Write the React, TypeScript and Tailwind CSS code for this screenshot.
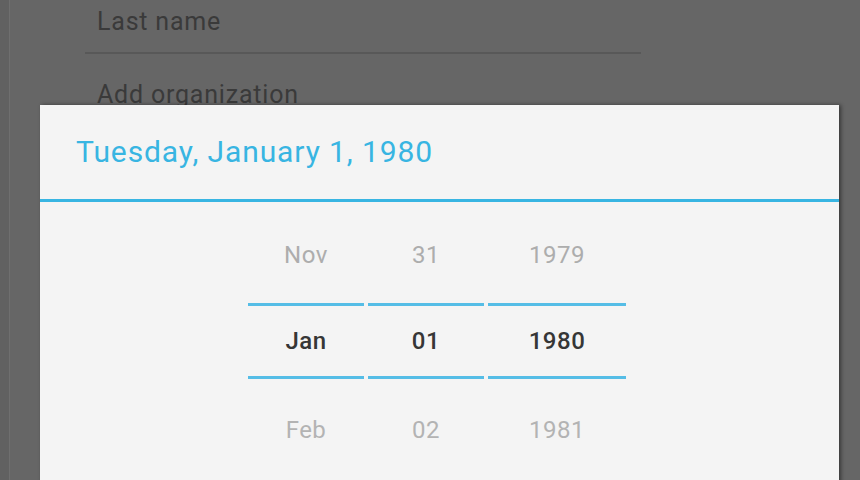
const FONT = { fontFamily: "Roboto, 'Noto Sans', 'Liberation Sans', sans-serif" };

const COLUMNS = [
  { prev: "Nov", value: "Jan", next: "Feb", width: "w-[116px]" },
  { prev: "31", value: "01", next: "02", width: "w-[116px]" },
  { prev: "1979", value: "1980", next: "1981", width: "w-[138px]" },
];

function PickerColumn({ prev, value, next, width }: { prev: string; value: string; next: string; width: string }) {
  return (
    <div className={`flex flex-col ${width}`}>
      <div className="h-[101px] pt-[37px] text-center text-[24px] leading-[32px] tracking-[0.5px] text-[#adadad]">{prev}</div>
      <div className="h-[3px] bg-[#55bde6]" />
      <div className="flex h-[70px] items-center justify-center text-[24px] font-medium leading-[32px] tracking-[0.5px] text-[#363636]">
        {value}
      </div>
      <div className="h-[3px] bg-[#55bde6]" />
      <div className="pt-[35px] text-center text-[24px] leading-[32px] tracking-[0.5px] text-[#b3b3b3]">{next}</div>
    </div>
  );
}

export default function App() {
  return (
    <div className="relative flex h-[480px] w-[860px] overflow-hidden bg-[#666666]" style={FONT}>
      {/* edge of the screen behind */}
      <div className="w-[9px] bg-[#616161]" />
      <div className="w-px bg-[#6f6f6f]" />

      {/* contact form under the dim */}
      <div className="flex flex-1 flex-col">
        <p className="ml-[87px] mt-[7px] text-[25px] leading-[29px] tracking-[0.8px] text-[#3a3a3a]">Last name</p>
        <div className="ml-[75px] mt-[16px] h-[2px] w-[556px] bg-[#585858]" />
        <p className="ml-[87px] mt-[26px] text-[25px] leading-[29px] tracking-[0.8px] text-[#3a3a3a]">Add organization</p>
      </div>

      {/* date picker dialog */}
      <div className="absolute left-[40px] top-[105px] flex h-[400px] w-[799px] flex-col bg-[#f4f4f4] shadow-[2px_0_4px_rgba(0,0,0,0.45)]">
        <div className="flex h-[94px] items-center pl-[36px]">
          <h2 className="text-[30px] leading-[36px] tracking-[0.9px] text-[#38b5e2]">Tuesday, January 1, 1980</h2>
        </div>
        <div className="h-[3px] bg-[#38b5e2]" />
        <div className="flex gap-[4px] pl-[208px]">
          {COLUMNS.map((col) => (
            <PickerColumn key={col.value} {...col} />
          ))}
        </div>
      </div>
    </div>
  );
}
